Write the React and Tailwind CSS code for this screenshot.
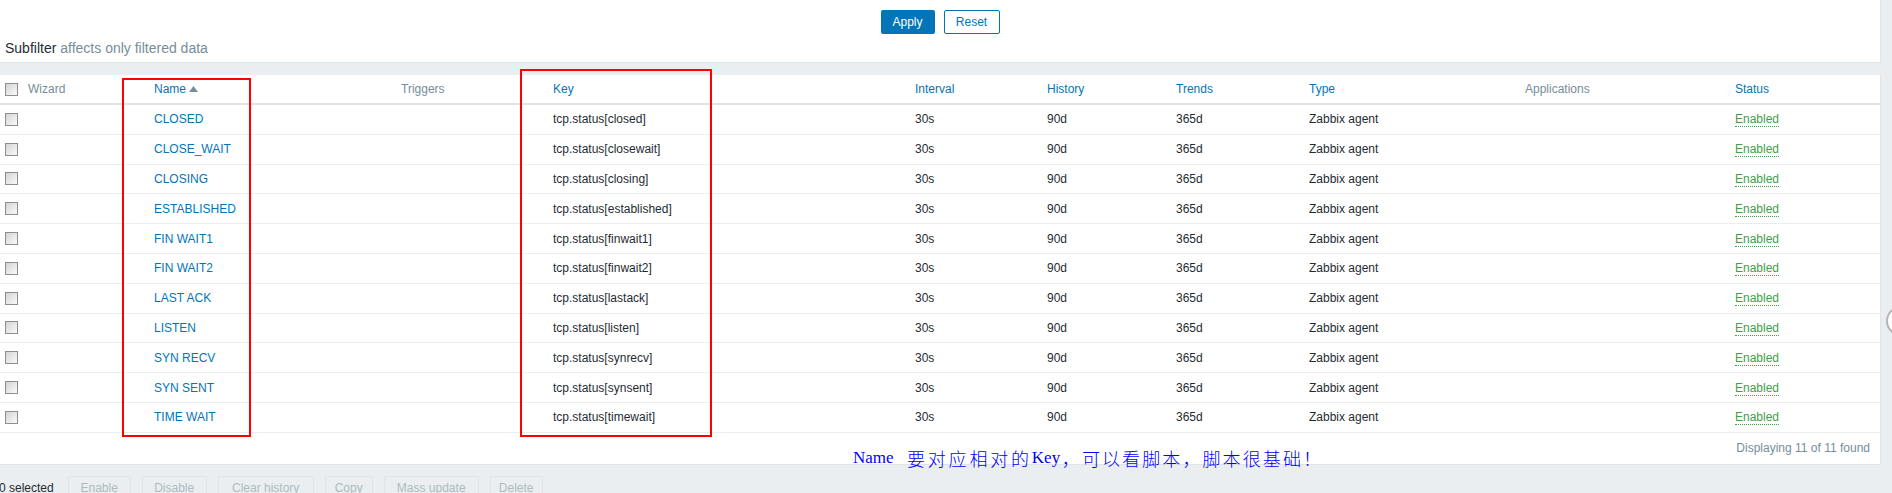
import React from 'react';

const rows = [
  ['CLOSED', 'closed'],
  ['CLOSE_WAIT', 'closewait'],
  ['CLOSING', 'closing'],
  ['ESTABLISHED', 'established'],
  ['FIN WAIT1', 'finwait1'],
  ['FIN WAIT2', 'finwait2'],
  ['LAST ACK', 'lastack'],
  ['LISTEN', 'listen'],
  ['SYN RECV', 'synrecv'],
  ['SYN SENT', 'synsent'],
  ['TIME WAIT', 'timewait'],
];

const cols = 'grid grid-cols-[23px_126px_247px_152px_362px_132px_129px_133px_216px_210px_1fr] items-center';

const Checkbox = () => (
  <span className="block w-[13px] h-[13px] border border-[#8e8e8e] bg-linear-to-br from-[#d4d4d4] to-[#fafafa]" />
);

const ActionButton = ({ label, width }) => (
  <button className={`h-[24px] border border-[#dfe4e7] rounded-[2px] text-[#acbbc2] bg-[#ebeef0] ${width}`}>
    {label}
  </button>
);

export default function App() {
  return (
    <div className="relative w-[1892px] h-[493px] overflow-hidden bg-[#ebeef0] font-['Liberation_Sans',Arial,sans-serif] text-[12px] text-[#1f2c33]">
      <div className="w-[1881px]">
        {/* Filter panel */}
        <div className="bg-white border-r border-b border-[#dfe4e7] h-[63px] pt-[10px]">
          <div className="flex justify-center gap-[9px]">
            <button className="w-[54px] h-[24px] rounded-[2px] bg-[#0275b8] text-white">Apply</button>
            <button className="w-[56px] h-[24px] rounded-[2px] border border-[#0275b8] bg-white text-[#0275b8]">Reset</button>
          </div>
          <div className="mt-[6px] pl-[5px] text-[14px] leading-[16px]">
            Subfilter <span className="text-[#768d99]">affects only filtered data</span>
          </div>
        </div>

        {/* Items table */}
        <div className="mt-[12px] bg-white border-r border-b border-[#dfe4e7]">
          <div className={`${cols} h-[30px] border-b-2 border-[#dfe4e7]`}>
            <div className="pl-[5px]"><Checkbox /></div>
            <div className="pl-[5px] text-[#768d99]">Wizard</div>
            <div className="pl-[5px] text-[#0275b8] flex items-center">
              Name
              <svg width="9" height="6" viewBox="0 0 9 6" className="ml-[3px]">
                <path d="M0 6 L4.5 0 L9 6 Z" fill="#768d99" />
              </svg>
            </div>
            <div className="pl-[5px] text-[#768d99]">Triggers</div>
            <div className="pl-[5px] text-[#0275b8]">Key</div>
            <div className="pl-[5px] text-[#0275b8]">Interval</div>
            <div className="pl-[5px] text-[#0275b8]">History</div>
            <div className="pl-[5px] text-[#0275b8]">Trends</div>
            <div className="pl-[5px] text-[#0275b8]">Type</div>
            <div className="pl-[5px] text-[#768d99]">Applications</div>
            <div className="pl-[5px] text-[#0275b8]">Status</div>
          </div>

          {rows.map(([name, key]) => (
            <div key={key} className={`${cols} h-[29.8px] border-b border-[#ebeef0]`}>
              <div className="pl-[5px]"><Checkbox /></div>
              <div />
              <div className="pl-[5px] text-[#0275b8]">{name}</div>
              <div />
              <div className="pl-[5px]">tcp.status[{key}]</div>
              <div className="pl-[5px]">30s</div>
              <div className="pl-[5px]">90d</div>
              <div className="pl-[5px]">365d</div>
              <div className="pl-[5px]">Zabbix agent</div>
              <div />
              <div className="pl-[5px]">
                <span className="text-[#429e47] border-b border-dotted border-[#429e47] leading-[14px] inline-block">Enabled</span>
              </div>
            </div>
          ))}

          <div className="h-[31px] flex items-center justify-end pr-[10px] text-[#768d99]">
            Displaying 11 of 11 found
          </div>
        </div>

        {/* Action bar */}
        <div className="flex items-start gap-[11px] pt-[11px]">
          <span className="leading-[24px] text-[#1f2c33] -ml-[1px] mr-[3px]">0 selected</span>
          <ActionButton label="Enable" width="w-[63px]" />
          <ActionButton label="Disable" width="w-[65px]" />
          <ActionButton label="Clear history" width="w-[96px]" />
          <ActionButton label="Copy" width="w-[48px]" />
          <ActionButton label="Mass update" width="w-[95px]" />
          <ActionButton label="Delete" width="w-[53px]" />
        </div>
      </div>

      {/* Annotations */}
      <div className="absolute left-[122px] top-[78px] w-[129px] h-[359px] border-2 border-[#ff0000]" />
      <div className="absolute left-[520px] top-[69px] w-[192px] h-[368px] border-2 border-[#ff0000]" />
      <div className="absolute left-[853px] top-[449px] leading-[18px] text-[#0000ff] whitespace-nowrap flex items-end">
        <span className="font-['Liberation_Serif',serif] text-[17px] w-[54px]">Name</span>
        <span className="font-['Noto_Sans_CJK_SC',sans-serif] text-[18px] font-light tracking-[2.8px]">要对应相对的</span>
        <span className="font-['Liberation_Serif',serif] text-[17px] w-[30px]">Key</span>
        <span className="font-['Noto_Sans_CJK_SC',sans-serif] text-[18px] font-light tracking-[2.1px]">，可以看脚本，脚本很基础！</span>
      </div>
      <div className="absolute left-[1886px] top-[306px] w-[30px] h-[30px] rounded-full border-2 border-[#b4b4b4] bg-white" />
    </div>
  );
}
